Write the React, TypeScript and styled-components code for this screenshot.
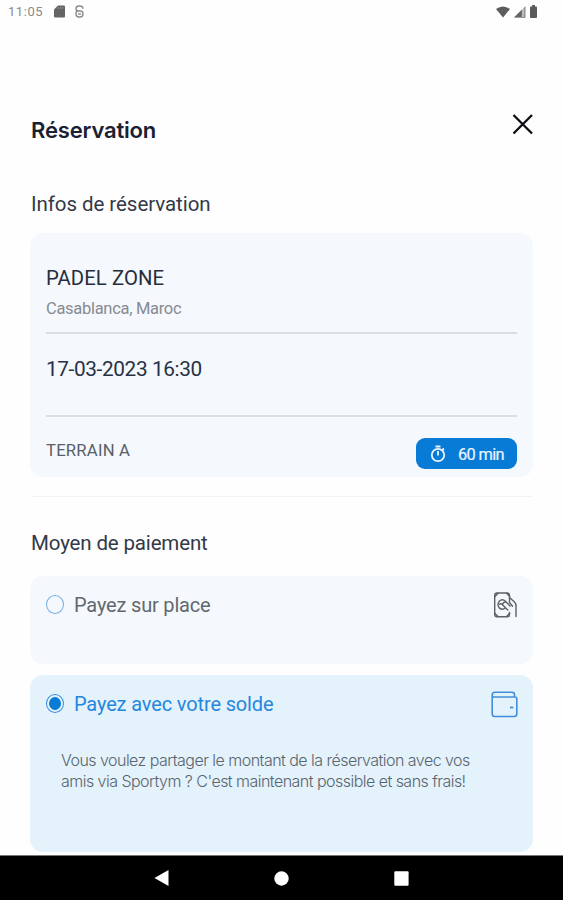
import React from "react";
import styled, { createGlobalStyle } from "styled-components";

const GlobalStyle = createGlobalStyle`
  * { box-sizing: border-box; }
  body { margin: 0; background: #fefefe; font-family: Roboto, sans-serif; }
  svg { display: block; flex: none; }
`;

const Screen = styled.div`
  width: 563px;
  height: 900px;
  display: flex;
  flex-direction: column;
  overflow: hidden;
  background: #fefefe;
`;

const StatusBar = styled.header`
  height: 24px;
  padding: 0 26px 1px 8px;
  display: flex;
  justify-content: space-between;
  align-items: center;
  color: #8b8b8b;
`;

const StatusGroup = styled.div<{ $gap: number }>`
  display: flex;
  align-items: center;
  gap: ${(p) => p.$gap}px;
`;

const Clock = styled.span`
  width: 36px;
  font-size: 13px;
  letter-spacing: 0.55px;
  white-space: nowrap;
`;

const Content = styled.main`
  flex: 1;
  padding: 0 30px 0 31px;
  display: flex;
  flex-direction: column;
`;

const TitleRow = styled.div`
  height: 66px;
  margin-top: 73px;
  display: flex;
  justify-content: space-between;
  align-items: flex-start;
`;

const Title = styled.h1`
  margin: 18px 0 0;
  font: 600 22px/30px Inter, sans-serif;
  letter-spacing: -0.17px;
  color: #1a2133;
`;

const CloseButton = styled.button`
  margin: 15px -1px 0 0;
  padding: 0;
  border: 0;
  background: none;
  color: #0b0d12;
`;

const Heading = styled.h2<{ $top: number; $spacing: number }>`
  margin: ${(p) => p.$top}px 0 0;
  font-size: 20.5px;
  font-weight: 400;
  line-height: 30px;
  letter-spacing: ${(p) => p.$spacing}px;
  color: #323948;
`;

const InfoCard = styled.section`
  height: 244px;
  margin: 14px 0 0 -1px;
  padding: 31px 16px 0;
  border-radius: 13px;
  background: #f5f8fc;
`;

const Venue = styled.div`
  font-size: 20.3px;
  line-height: 28px;
  letter-spacing: 0.08px;
  color: #252d3d;
`;

const City = styled.div`
  margin-top: 3px;
  font-size: 16.5px;
  line-height: 28px;
  letter-spacing: -0.3px;
  color: #878b92;
`;

const Rule = styled.hr<{ $top: number }>`
  height: 2px;
  margin: ${(p) => p.$top}px 0 0;
  border: 0;
  background: #dadde2;
`;

const DateTime = styled.div`
  margin-top: 21px;
  font-size: 20.8px;
  line-height: 28px;
  letter-spacing: -0.38px;
  color: #273146;
`;

const CourtRow = styled.div`
  display: flex;
  justify-content: space-between;
  align-items: flex-start;
`;

const Court = styled.span`
  margin-top: 20px;
  font-size: 16.7px;
  line-height: 28px;
  letter-spacing: 0.2px;
  color: #596069;
`;

const Duration = styled.span`
  width: 101px;
  height: 31px;
  margin-top: 21px;
  padding: 2px 0 0 14px;
  display: flex;
  align-items: center;
  gap: 12px;
  border-radius: 9px;
  background: #087bd7;
  color: #eaf5ff;
  font-size: 16.4px;
  letter-spacing: -0.65px;
  white-space: nowrap;
  -webkit-text-stroke: 0.2px currentColor;
  svg { margin-top: -2px; }
`;

const Separator = styled.div`
  height: 1px;
  margin-top: 19px;
  background: #f0f2f4;
`;

const Option = styled.label<{ $selected?: boolean }>`
  height: ${(p) => (p.$selected ? 177 : 88)}px;
  margin: ${(p) => (p.$selected ? 11 : 18)}px 0 0 -1px;
  padding: 14px 15px 0 16px;
  display: flex;
  flex-direction: column;
  border-radius: 13px;
  background: ${(p) => (p.$selected ? "#e4f2fc" : "#f5f8fc")};
  color: ${(p) => (p.$selected ? "#2487dc" : "#62686e")};
`;

const OptionRow = styled.div`
  height: 30px;
  display: flex;
  align-items: center;
`;

const Radio = styled.span<{ $selected?: boolean }>`
  width: 18px;
  height: 19px;
  margin-top: -2px;
  padding: 2px;
  border: 1px solid ${(p) => (p.$selected ? "#3a8fdc" : "#72aee8")};
  border-radius: 50%;
  background: ${(p) => (p.$selected ? "#087bd7 content-box" : "transparent")};
`;

const OptionLabel = styled.span<{ $spacing: number }>`
  flex: 1;
  margin-left: 10px;
  font-size: 20px;
  line-height: 30px;
  letter-spacing: ${(p) => p.$spacing}px;
`;

const Note = styled.p`
  margin: 31px 0 0 15px;
  font: 300 16px/20.5px Inter, sans-serif;
  letter-spacing: -0.53px;
  color: #59656e;
  white-space: nowrap;
`;

const NavBar = styled.nav`
  height: 45px;
  flex: none;
  display: flex;
  justify-content: center;
  align-items: center;
  gap: 105px;
  border-top: 1px solid #777;
  background: #000;
`;

const SdCard = () => (
  <svg width="11" height="13" viewBox="0 0 11 13">
    <path d="M4 .5h6a1 1 0 0 1 1 1v10a1 1 0 0 1-1 1H1a1 1 0 0 1-1-1V4.5z" fill="#646464" />
    <path d="M4.200 2v2M6.300 2v2M8.400 2v2" stroke="#999" strokeWidth=".8" />
  </svg>
);

const SyncMark = () => (
  <svg width="9" height="13" viewBox="0 0 9 13" fill="none" stroke="#8b8b8b" strokeWidth="1.4">
    <path d="M8 3.800Q7.800 1 5 1H4Q1 1 1 3.500T3.500 6h2Q8 6 8 9t-3 3H4Q1 12 1 9V8Q1 6 3.500 6" />
    <path d="M3 9h3" />
  </svg>
);

const Wifi = () => (
  <svg width="14" height="12" viewBox="0 0 14 12">
    <path d="M0 3Q7-2 14 3L7 11.500z" fill="#5d5d5d" />
  </svg>
);

const Signal = () => (
  <svg width="12" height="12" viewBox="0 0 12 12">
    <path d="M0 11.500 11.500 0v11.500z" fill="#bbb" />
    <path d="M0 11.500 7.800 3.700v7.800z" fill="#646464" />
    <path d="M10.800 1v10.500H8" fill="none" stroke="#888" />
  </svg>
);

const Battery = () => (
  <svg width="7" height="13" viewBox="0 0 8 13" preserveAspectRatio="none">
    <path d="M2.400 0h3.200v1.500H7q1 0 1 1V12q0 1-1 1H1q-1 0-1-1V2.500q0-1 1-1h1.400z" fill="#5a5a5a" />
  </svg>
);

const CloseIcon = () => (
  <svg width="23" height="24" viewBox="0 0 23 24" fill="none" stroke="currentColor" strokeWidth="2.300">
    <path d="m2.500 3 18.500 18.500M21 3 2.500 21.500" />
  </svg>
);

const Stopwatch = () => (
  <svg width="16" height="18" viewBox="0 0 16 18" fill="none" stroke="currentColor" strokeWidth="1.800">
    <circle cx="8" cy="10" r="6.200" />
    <path d="M5.500 1.500h5M8 6v4.500M12.400 5l1.500-1.500" />
  </svg>
);

const CashHand = () => (
  <svg width="25" height="27" viewBox="0 0 25 27" fill="none" stroke="#5d6267" strokeWidth="1.400" strokeLinejoin="round" strokeLinecap="round">
    <path d="M16.500 5.500V3.200q0-2.200-2.200-2.200H4Q1.700 1 1.700 3.200V22.500q0 2.300 2.300 2.300h10.300q2.200 0 2.200-2.300v-2" />
    <path d="M2 4.500 5 1.200M13.500 1.200l3 3M2 21.500l3 3M13.500 24.500l3-3" />
    <path d="M16.500 5.500 21.500 10q1.500 1.600 1.500 4V24.500M16.500 5.500v5l3 3.800" />
    <path d="M13 9.800Q9.500 6 6.500 9c-2.800 3-1.300 7.500 2.200 8.200M13 9.800q-2.800.2-3.800 2.700l5.500 5.500M13 9.800l4 4.200M9.200 12.500q-1.500-1.500-2.500-.2M8.700 17.200q2 .3 3.500-1.200" />
  </svg>
);

const Wallet = () => (
  <svg width="27" height="27" viewBox="0 0 27 27" fill="none" stroke="#438edb" strokeWidth="1.600" strokeLinejoin="round">
    <path d="M1.200 4.500v18.300q0 2.700 2.700 2.700h19.200q2.700 0 2.700-2.700V8q0-2-2-2H3Q1.200 6 1.200 4.200 1.200 1.300 4 1.300h17q2.500 0 2.500 2.500V6" />
    <path d="M19 16.500h3.300" strokeWidth="1.800" />
  </svg>
);

const BackIcon = () => (
  <svg width="15" height="16" viewBox="0 0 15 16" fill="#fff"><path d="M.5 8 14.500 0v16z" /></svg>
);

const HomeIcon = () => (
  <svg width="15" height="15" viewBox="0 0 15 15" fill="#fff"><circle cx="7.500" cy="7.500" r="7.200" /></svg>
);

const RecentsIcon = () => (
  <svg width="15" height="15" viewBox="0 0 15 15" fill="#fff"><rect x=".3" y=".3" width="14.300" height="14.500" rx="1" /></svg>
);

export default function App() {
  return (
    <>
      <GlobalStyle />
      <Screen>
        <StatusBar>
          <StatusGroup $gap={10}>
            <Clock>11:05</Clock>
            <SdCard />
            <SyncMark />
          </StatusGroup>
          <StatusGroup $gap={4}>
            <Wifi />
            <Signal />
            <Battery />
          </StatusGroup>
        </StatusBar>
        <Content>
          <TitleRow>
            <Title>Réservation</Title>
            <CloseButton aria-label="Fermer"><CloseIcon /></CloseButton>
          </TitleRow>
          <Heading $top={26} $spacing={-0.06}>Infos de réservation</Heading>
          <InfoCard>
            <Venue>PADEL ZONE</Venue>
            <City>Casablanca, Maroc</City>
            <Rule $top={9} />
            <DateTime>17-03-2023 16:30</DateTime>
            <Rule $top={32} />
            <CourtRow>
              <Court>TERRAIN A</Court>
              <Duration><Stopwatch />60 min</Duration>
            </CourtRow>
          </InfoCard>
          <Separator />
          <Heading $top={31} $spacing={-0.15}>Moyen de paiement</Heading>
          <Option>
            <OptionRow>
              <Radio />
              <OptionLabel $spacing={-0.18}>Payez sur place</OptionLabel>
              <CashHand />
            </OptionRow>
          </Option>
          <Option $selected>
            <OptionRow>
              <Radio $selected />
              <OptionLabel $spacing={-0.14}>Payez avec votre solde</OptionLabel>
              <Wallet />
            </OptionRow>
            <Note>
              Vous voulez partager le montant de la réservation avec vos
              <br />
              amis via Sportym ? C'est maintenant possible et sans frais!
            </Note>
          </Option>
        </Content>
        <NavBar>
          <BackIcon />
          <HomeIcon />
          <RecentsIcon />
        </NavBar>
      </Screen>
    </>
  );
}
